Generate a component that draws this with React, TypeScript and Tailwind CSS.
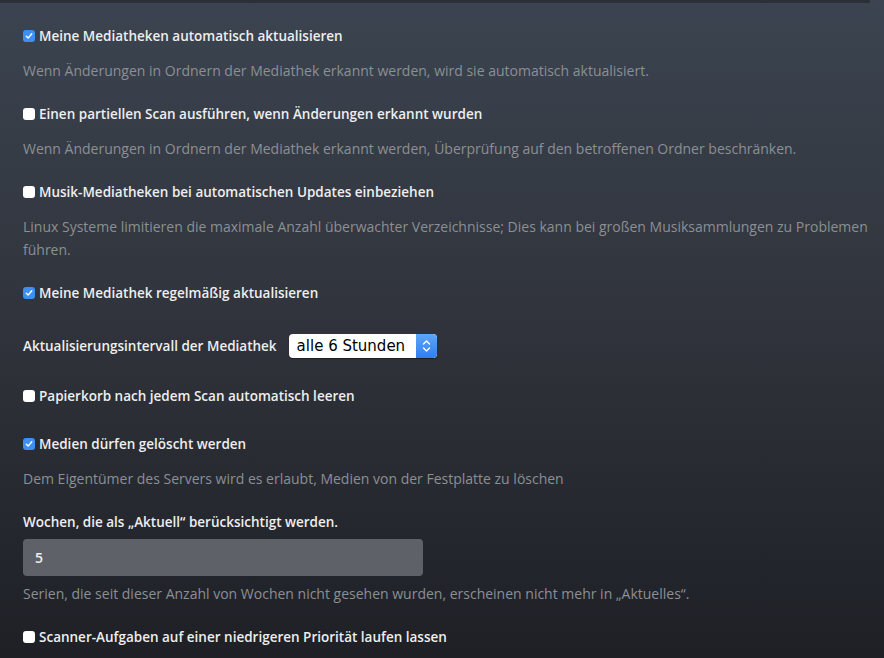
import React from "react";

interface CheckProps {
  label: string;
  checked?: boolean;
  desc?: string;
}

const Box = ({ checked }: { checked?: boolean }) =>
  checked ? (
    <span className="mr-[4px] flex h-[12px] w-[12px] flex-none items-center justify-center rounded-[3px] bg-[#3d8ff4]">
      <svg width="8" height="8" viewBox="0 0 8 8">
        <path d="M1.3 4.2 L3.2 6 L6.8 1.8" fill="none" stroke="#fff" strokeWidth="1.4" strokeLinecap="round" strokeLinejoin="round" />
      </svg>
    </span>
  ) : (
    <span className="mr-[4px] h-[12px] w-[12px] flex-none rounded-[3px] bg-white" />
  );

const Check = ({ label, checked, desc }: CheckProps) => (
  <div>
    <label className="flex h-[20px] items-center text-[13.5px] font-semibold text-[#eeeeee]">
      <Box checked={checked} />
      {label}
    </label>
    {desc && <p className="mt-[13px] pr-[14px] text-[14px] leading-[23px] text-[#8c8f94]">{desc}</p>}
  </div>
);

export default function App() {
  return (
    <div
      className="h-[658px] w-[884px] overflow-hidden bg-gradient-to-b from-[#3b4450] via-[#30333b] to-[#1e2026]"
      style={{ fontFamily: '"Open Sans", "Liberation Sans", sans-serif' }}
    >
      <div className="h-[3px] w-[870px] bg-[#2b3038]" />
      <div className="flex flex-col gap-[22px] pt-[23px] pl-[23px]">
        <Check
          checked
          label="Meine Mediatheken automatisch aktualisieren"
          desc="Wenn Änderungen in Ordnern der Mediathek erkannt werden, wird sie automatisch aktualisiert."
        />
        <Check
          label="Einen partiellen Scan ausführen, wenn Änderungen erkannt wurden"
          desc="Wenn Änderungen in Ordnern der Mediathek erkannt werden, Überprüfung auf den betroffenen Ordner beschränken."
        />
        <Check
          label="Musik-Mediatheken bei automatischen Updates einbeziehen"
          desc="Linux Systeme limitieren die maximale Anzahl überwachter Verzeichnisse; Dies kann bei großen Musiksammlungen zu Problemen führen."
        />
        <Check checked label="Meine Mediathek regelmäßig aktualisieren" />
        <div className="mt-[9px] flex items-center">
          <span className="text-[13.5px] font-semibold text-[#eeeeee]">Aktualisierungsintervall der Mediathek</span>
          <div className="ml-[12px] flex h-[24px] w-[148px] overflow-hidden rounded-[4px] bg-white shadow-[0_1px_1px_rgba(0,0,0,0.4)]">
            <span
              className="flex flex-1 items-center pl-[8px] text-[15px] text-black"
              style={{ fontFamily: '"DejaVu Sans", "Liberation Sans", sans-serif' }}
            >
              alle 6 Stunden
            </span>
            <span className="flex w-[21px] items-center justify-center rounded-r-[4px] bg-gradient-to-b from-[#5ea6fa] to-[#2f7ff0]">
              <svg width="9" height="14" viewBox="0 0 9 14">
                <path d="M1.5 5 L4.5 2 L7.5 5 M1.5 9 L4.5 12 L7.5 9" fill="none" stroke="#fff" strokeWidth="1.4" strokeLinecap="round" strokeLinejoin="round" />
              </svg>
            </span>
          </div>
        </div>
        <div className="mt-[6px]">
          <Check label="Papierkorb nach jedem Scan automatisch leeren" />
        </div>
        <div className="mt-[6px]">
          <Check
            checked
            label="Medien dürfen gelöscht werden"
            desc="Dem Eigentümer des Servers wird es erlaubt, Medien von der Festplatte zu löschen"
          />
        </div>
        <div>
          <div className="text-[13.5px] font-semibold leading-[20px] text-[#eeeeee]">
            Wochen, die als „Aktuell“ berücksichtigt werden.
          </div>
          <div className="mt-[7px] flex h-[37px] w-[400px] items-center rounded-[4px] bg-[#5f6168] pl-[12px] text-[14px] font-semibold text-[#eeeeee]">
            5
          </div>
          <p className="mt-[6px] text-[14px] leading-[23px] text-[#8c8f94]">
            Serien, die seit dieser Anzahl von Wochen nicht gesehen wurden, erscheinen nicht mehr in „Aktuelles“.
          </p>
        </div>
        <Check label="Scanner-Aufgaben auf einer niedrigeren Priorität laufen lassen" />
      </div>
    </div>
  );
}
